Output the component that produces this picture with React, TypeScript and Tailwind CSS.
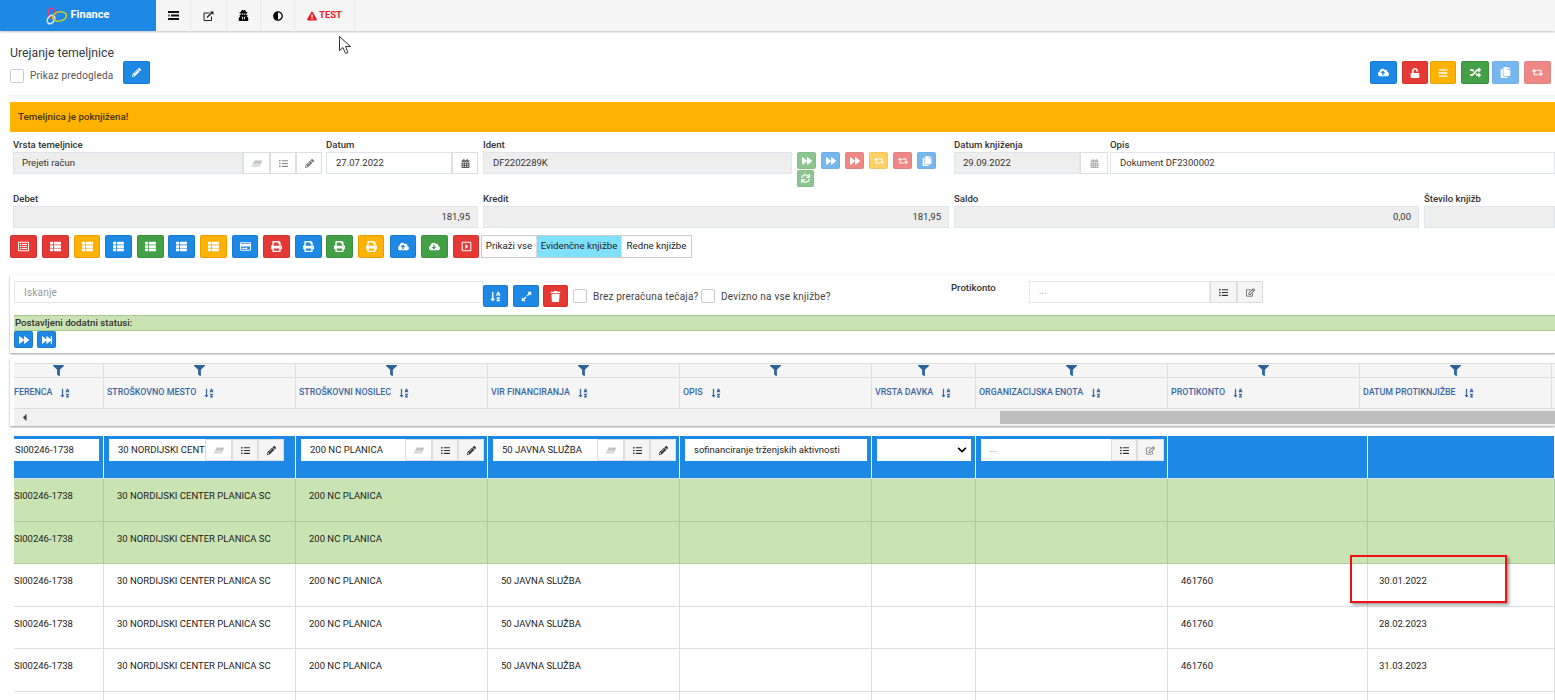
import type { ReactNode } from "react";
import {
  FaAdjust,
  FaBars,
  FaCalendarAlt,
  FaCaretLeft,
  FaChevronDown,
  FaCloudDownloadAlt,
  FaCloudUploadAlt,
  FaCopy,
  FaExclamationTriangle,
  FaExpandAlt,
  FaFastForward,
  FaFilter,
  FaForward,
  FaListUl,
  FaPencilAlt,
  FaPrint,
  FaRandom,
  FaRegCaretSquareRight,
  FaRegCreditCard,
  FaRegEdit,
  FaRegListAlt,
  FaRetweet,
  FaSortAlphaDown,
  FaSync,
  FaThList,
  FaTrash,
  FaUnlock,
  FaUserSecret,
} from "react-icons/fa";

const HEADERS = [
  "FERENCA",
  "STROŠKOVNO MESTO",
  "STROŠKOVNI NOSILEC",
  "VIR FINANCIRANJA",
  "OPIS",
  "VRSTA DAVKA",
  "ORGANIZACIJSKA ENOTA",
  "PROTIKONTO",
  "DATUM PROTIKNJIŽBE",
];

const ROWS = [
  { green: true, vir: "", konto: "", datum: "" },
  { green: true, vir: "", konto: "", datum: "" },
  { green: false, vir: "50 JAVNA SLUŽBA", konto: "461760", datum: "30.01.2022" },
  { green: false, vir: "50 JAVNA SLUŽBA", konto: "461760", datum: "28.02.2023" },
  { green: false, vir: "50 JAVNA SLUŽBA", konto: "461760", datum: "31.03.2023" },
];

function Btn({ className, children }: { className: string; children: ReactNode }) {
  return (
    <button className={`flex shrink-0 items-center justify-center rounded-[2px] border border-black/10 text-[11px] text-white ${className}`}>
      {children}
    </button>
  );
}

function Addon({ children, className = "" }: { children: ReactNode; className?: string }) {
  return (
    <span className={`flex h-[22px] shrink-0 items-center justify-center border border-[#dddddd] text-[9px] ${className}`}>
      {children}
    </span>
  );
}

function Label({ children }: { children: ReactNode }) {
  return <div className="h-[20px] pt-[6px] text-[9.6px] leading-[13px] font-medium text-[#333333]">{children}</div>;
}

function Check() {
  return <span className="h-[14px] w-[14px] shrink-0 rounded-[2px] border border-[#cccccc] bg-white" />;
}

// flat slanted eraser, the package one is too tall
function Eraser() {
  return (
    <svg width="12" height="7" viewBox="0 0 12 7">
      <path d="M3.5 0.5 H11.5 L8.5 6.5 H0.5 Z" fill="#c4c4c4" />
      <path d="M2 3.5 H10 L8.5 6.5 H0.5 Z" fill="#dedede" />
    </svg>
  );
}

function LookupAddons() {
  return (
    <>
      <Addon className="w-[27px] bg-white"><Eraser /></Addon>
      <Addon className="w-[26px] bg-[#f5f5f5] text-[#333333]"><FaListUl /></Addon>
      <Addon className="w-[26px] bg-[#f5f5f5] text-[#333333]"><FaPencilAlt /></Addon>
    </>
  );
}

function FinanceLogo() {
  return (
    <svg width="24" height="18" viewBox="0 0 24 18" fill="none">
      <ellipse cx="8" cy="6.5" rx="3.4" ry="5.5" stroke="#d8407f" strokeWidth="1.6" transform="rotate(-18 8 6.5)" />
      <ellipse cx="7" cy="12.5" rx="3.2" ry="4.6" stroke="#dbeafe" strokeWidth="1.6" transform="rotate(35 7 12.5)" />
      <ellipse cx="15.5" cy="9.5" rx="7" ry="4.6" stroke="#b8c93a" strokeWidth="1.7" transform="rotate(-12 15.5 9.5)" />
    </svg>
  );
}

function NavPanelIcon() {
  return (
    <svg width="11" height="9" viewBox="0 0 11 9">
      <path d="M0 0 H11 V2 H0 Z M3 3.5 H11 V5.5 H3 Z M0 7 H11 V9 H0 Z" fill="#111111" />
      <path d="M0 3.5 H2 V5.5 H0 Z" fill="#666666" />
    </svg>
  );
}

function NavLinkIcon() {
  return (
    <svg width="11" height="10" viewBox="0 0 11 10" fill="none" stroke="#222222">
      <path d="M6.5 2 H1 V9.5 H8.5 V5.5" strokeWidth="1" />
      <path d="M4 6.5 L9.5 1" strokeWidth="1.4" />
      <path d="M7 0.5 H10.5 V4 Z" fill="#222222" stroke="none" />
    </svg>
  );
}

export default function App() {
  return (
    <div className="relative h-[700px] w-[1555px] overflow-hidden bg-white font-['Roboto',sans-serif] text-[#333333]">
      {/* top bar */}
      <nav className="flex h-[31px] bg-[#f5f5f5] shadow-[0_1px_2px_rgba(0,0,0,0.25)]">
        <div className="flex w-[156px] items-center justify-center gap-[3px] bg-[#1e88e5] pr-[3px] text-[11px] font-bold text-white">
          <FinanceLogo />
          Finance
        </div>
        <div className="flex w-[35px] items-center justify-center border-r border-[#e8e8e8]"><NavPanelIcon /></div>
        <div className="flex w-[36px] items-center justify-center border-r border-[#e8e8e8]"><NavLinkIcon /></div>
        <div className="flex w-[34px] items-center justify-center border-r border-[#e8e8e8] text-[11px] text-black"><FaUserSecret /></div>
        <div className="flex w-[34px] items-center justify-center border-r border-[#e8e8e8] text-[10px] text-black"><FaAdjust /></div>
        <div className="flex w-[60px] items-center justify-center gap-[2px] border-r border-[#e8e8e8] text-[9.5px] font-bold text-[#ee1c25]">
          <FaExclamationTriangle className="text-[10px]" /> TEST
        </div>
      </nav>

      {/* page title */}
      <header className="flex items-end justify-between pt-[14px] pr-[4px] pl-[10px]">
        <div>
          <h1 className="text-[12.3px] leading-[16px] text-[#333c4a]">Urejanje temeljnice</h1>
          <div className="flex h-[23px] items-center">
            <span className="mt-[6px] flex items-center gap-[6px] text-[10px] tracking-[0.2px] text-[#555555]">
              <Check />
              Prikaz predogleda
            </span>
            <Btn className="ml-[10px] h-[23px] w-[27px] bg-[#1e88e5]"><FaPencilAlt className="text-[9px]" /></Btn>
          </div>
        </div>
        <div className="flex h-[23px] text-[11px]">
          <Btn className="h-[23px] w-[27px] bg-[#1e88e5]"><FaCloudUploadAlt /></Btn>
          <Btn className="ml-[5px] h-[23px] w-[26px] bg-[#e53935]"><FaUnlock className="text-[10px]" /></Btn>
          <Btn className="ml-[2px] h-[23px] w-[26px] bg-[#ffb300]"><FaBars className="text-[10px]" /></Btn>
          <Btn className="ml-[5px] h-[23px] w-[28px] bg-[#43a047]"><FaRandom /></Btn>
          <Btn className="ml-[3px] h-[23px] w-[27px] bg-[#1e88e5] opacity-60"><FaCopy /></Btn>
          <Btn className="ml-[5px] h-[23px] w-[27px] bg-[#e53935] opacity-60"><FaRetweet /></Btn>
        </div>
      </header>
      <div className="mt-[11px] ml-[8px] h-px bg-[#f3f3f3]" />

      {/* status banner */}
      <div className="mt-[6px] ml-[10px] flex h-[30px] items-center bg-[#ffb300] pl-[8px] text-[9.8px] font-medium text-[#4a3300]">
        Temeljnica je poknjižena!
      </div>

      {/* header form */}
      <section className="flex h-[60px] pl-[13px] text-[9.5px]">
        <div className="w-[309px]">
          <Label>Vrsta temeljnice</Label>
          <div className="flex">
            <div className="flex h-[22px] w-[230px] items-center border border-[#dfe5ea] bg-[#eeeeee] pl-[8px]">Prejeti račun</div>
            <Addon className="w-[27px] bg-white"><Eraser /></Addon>
            <Addon className="w-[26px] bg-white text-[#888888]"><FaListUl /></Addon>
            <Addon className="w-[26px] bg-white text-[#777777]"><FaPencilAlt /></Addon>
          </div>
        </div>
        <div className="ml-[4px] w-[152px]">
          <Label>Datum</Label>
          <div className="flex">
            <div className="flex h-[22px] w-[126px] items-center border border-[#dfe5ea] bg-white pl-[9px]">27.07.2022</div>
            <Addon className="w-[26px] bg-white text-[#555555]"><FaCalendarAlt /></Addon>
          </div>
        </div>
        <div className="ml-[5px] w-[309px]">
          <Label>Ident</Label>
          <div className="flex h-[22px] items-center border border-[#dfe5ea] bg-[#eeeeee] pl-[9px]">DF2202289K</div>
        </div>
        <div className="mt-[20px] ml-[5px] flex w-[157px] flex-wrap content-start gap-x-[5px] gap-y-[1px]">
          <Btn className="h-[17px] w-[19px] bg-[#43a047] opacity-60"><FaForward className="text-[10px]" /></Btn>
          <Btn className="h-[17px] w-[19px] bg-[#1e88e5] opacity-60"><FaForward className="text-[10px]" /></Btn>
          <Btn className="h-[17px] w-[19px] bg-[#e53935] opacity-60"><FaForward className="text-[10px]" /></Btn>
          <Btn className="h-[17px] w-[19px] bg-[#ffb300] opacity-60"><FaRetweet className="text-[10px]" /></Btn>
          <Btn className="h-[17px] w-[19px] bg-[#e53935] opacity-60"><FaRetweet className="text-[10px]" /></Btn>
          <Btn className="h-[17px] w-[19px] bg-[#1e88e5] opacity-60"><FaCopy className="text-[10px]" /></Btn>
          <Btn className="h-[17px] w-[17px] bg-[#43a047] opacity-60"><FaSync className="text-[9px]" /></Btn>
        </div>
        <div className="w-[156px]">
          <Label>Datum knjiženja</Label>
          <div className="flex">
            <div className="flex h-[22px] w-[126px] items-center border border-[#dfe5ea] bg-[#eeeeee] pl-[8px]">29.09.2022</div>
            <Addon className="w-[28px] bg-white text-[#aaaaaa]"><FaCalendarAlt /></Addon>
          </div>
        </div>
        <div className="min-w-0 flex-1">
          <Label>Opis</Label>
          <div className="flex h-[22px] items-center border border-[#dfe5ea] bg-white pl-[9px]">Dokument DF2300002</div>
        </div>
      </section>

      <section className="flex gap-[5px] pl-[13px] text-[9.5px]">
        <div className="w-[465px]">
          <div className="h-[14px] text-[9.6px] leading-[13px] font-medium">Debet</div>
          <div className="flex h-[22px] items-center justify-end border border-[#dfe5ea] bg-[#eeeeee] pr-[7px]">181,95</div>
        </div>
        <div className="w-[466px]">
          <div className="h-[14px] text-[9.6px] leading-[13px] font-medium">Kredit</div>
          <div className="flex h-[22px] items-center justify-end border border-[#dfe5ea] bg-[#eeeeee] pr-[7px]">181,95</div>
        </div>
        <div className="w-[465px]">
          <div className="h-[14px] text-[9.6px] leading-[13px] font-medium">Saldo</div>
          <div className="flex h-[22px] items-center justify-end border border-[#dfe5ea] bg-[#eeeeee] pr-[7px]">0,00</div>
        </div>
        <div className="flex-1">
          <div className="h-[14px] text-[9.6px] leading-[13px] font-medium">Število knjižb</div>
          <div className="h-[22px] border border-[#dfe5ea] bg-[#eeeeee]" />
        </div>
      </section>

      {/* action buttons */}
      <div className="mt-[7px] flex h-[23px] pl-[10px]">
        <Btn className="h-[23px] w-[27px] bg-[#e53935]"><FaRegListAlt /></Btn>
        <Btn className="ml-[5px] h-[23px] w-[27px] bg-[#e53935]"><FaThList /></Btn>
        <Btn className="ml-[5px] h-[23px] w-[26px] bg-[#ffb300]"><FaThList /></Btn>
        <Btn className="ml-[5px] h-[23px] w-[27px] bg-[#1e88e5]"><FaThList /></Btn>
        <Btn className="ml-[5px] h-[23px] w-[27px] bg-[#43a047]"><FaThList /></Btn>
        <Btn className="ml-[4px] h-[23px] w-[27px] bg-[#1e88e5]"><FaThList /></Btn>
        <Btn className="ml-[5px] h-[23px] w-[27px] bg-[#ffb300]"><FaThList /></Btn>
        <Btn className="ml-[5px] h-[23px] w-[26px] bg-[#1e88e5]"><FaRegCreditCard /></Btn>
        <Btn className="ml-[5px] h-[23px] w-[27px] bg-[#e53935]"><FaPrint /></Btn>
        <Btn className="ml-[5px] h-[23px] w-[27px] bg-[#1e88e5]"><FaPrint /></Btn>
        <Btn className="ml-[4px] h-[23px] w-[27px] bg-[#43a047]"><FaPrint /></Btn>
        <Btn className="ml-[5px] h-[23px] w-[26px] bg-[#ffb300]"><FaPrint /></Btn>
        <Btn className="ml-[6px] h-[23px] w-[26px] bg-[#1e88e5]"><FaCloudUploadAlt /></Btn>
        <Btn className="ml-[5px] h-[23px] w-[27px] bg-[#43a047]"><FaCloudDownloadAlt /></Btn>
        <Btn className="ml-[5px] h-[23px] w-[26px] bg-[#e53935]"><FaRegCaretSquareRight /></Btn>
        <div className="ml-[2px] flex h-[23px] border border-[#cccccc] text-[9.7px] text-[#222222]">
          <span className="flex w-[55px] items-center justify-center border-r border-[#dddddd]">Prikaži vse</span>
          <span className="flex w-[85px] items-center justify-center border-r border-[#dddddd] bg-[#80e1fd]">Evidenčne knjižbe</span>
          <span className="flex w-[69px] items-center justify-center">Redne knjižbe</span>
        </div>
      </div>

      {/* filter panel */}
      <section className="mt-[17px] ml-[10px] h-[78px] pt-[6px] pl-[4px] shadow-[0_1px_2px_rgba(0,0,0,0.4)]">
        <div className="flex h-[34px] text-[10px] tracking-[0.2px] whitespace-nowrap text-[#444444]">
          <div className="flex h-[22px] w-[469px] items-center border border-[#dfe7ef] pl-[9px] text-[10px] text-[#999999]">Iskanje</div>
          <Btn className="mt-[4px] h-[22px] w-[25px] bg-[#1e88e5]"><FaSortAlphaDown /></Btn>
          <Btn className="mt-[4px] ml-[5px] h-[22px] w-[26px] bg-[#1e88e5]"><FaExpandAlt /></Btn>
          <Btn className="mt-[4px] ml-[4px] h-[22px] w-[25px] bg-[#e53935]"><FaTrash /></Btn>
          <div className="mt-[4px] ml-[5px] flex h-[22px] items-center">
            <Check />
            <span className="ml-[6px] w-[108px]">Brez preračuna tečaja?</span>
            <Check />
            <span className="ml-[6px] w-[230px]">Devizno na vse knjižbe?</span>
          </div>
          <div className="w-[78px] text-[9.6px] leading-[13px] font-medium tracking-normal text-[#333333]">Protikonto</div>
          <div className="flex h-[22px] w-[181px] items-center border border-[#dfe7ef] pl-[9px] text-[9px] text-[#777777]">...</div>
          <Addon className="w-[27px] bg-[#f5f5f5] text-[#333333]"><FaListUl /></Addon>
          <Addon className="w-[26px] bg-[#f5f5f5] text-[#555555]"><FaRegEdit /></Addon>
        </div>
        <div className="flex h-[16px] items-center border-y border-[#a8c890] bg-[#cae3b3] pl-[1px] text-[9.7px] font-medium text-[#333333]">Postavljeni dodatni statusi:</div>
        <div className="flex gap-[4px]">
          <Btn className="h-[17px] w-[19px] bg-[#1e88e5]"><FaForward className="text-[10px]" /></Btn>
          <Btn className="h-[17px] w-[19px] bg-[#1e88e5]"><FaFastForward className="text-[10px]" /></Btn>
        </div>
      </section>

      {/* table header */}
      <section className="mt-[5px] ml-[10px] h-[68px] pt-[5px] pl-[4px] shadow-[0_1px_2px_rgba(0,0,0,0.4)]">
        <div className="grid h-[15px] grid-cols-[90px_192px_192px_192px_192px_104px_192px_192px_192px_1fr] border-y border-[#dddddd] bg-[#f5f5f5]">
          {HEADERS.map((h) => (
            <div key={h} className="flex items-center justify-center border-r border-[#dddddd] text-[11px] text-[#2b6299]">
              <FaFilter />
            </div>
          ))}
          <div />
        </div>
        <div className="grid h-[31px] grid-cols-[90px_192px_192px_192px_192px_104px_192px_192px_192px_1fr] border-b border-[#dddddd] bg-[#f5f5f5]">
          {HEADERS.map((h, i) => (
            <div key={h} className={`flex items-center gap-[8px] overflow-hidden border-r border-[#dddddd] text-[8.9px] font-medium whitespace-nowrap text-[#3a68a5] ${i === 0 ? "" : "pl-[3px]"}`}>
              {h}
              <FaSortAlphaDown className="shrink-0 text-[10px]" />
            </div>
          ))}
          <div />
        </div>
        <div className="flex h-[17px] items-center justify-between bg-[#f1f1f1]">
          <FaCaretLeft className="ml-[5px] text-[11px] text-[#444444]" />
          <div className="h-[13px] w-[555px] bg-[#bdbdbd]" />
        </div>
      </section>

      {/* data rows */}
      <section className="mt-[10px] ml-[14px] text-[9.5px] text-[#222222]">
        <div className="grid h-[43px] grid-cols-[90px_192px_192px_192px_192px_104px_192px_200px_1fr] border-b border-[#cfe0ee] bg-[#1e88e5]">
          <div className="border-r border-white pt-[3px]">
            <div className="flex h-[22px] w-[85px] items-center bg-white pl-[1px]">SI00246-1738</div>
          </div>
          <div className="flex border-r border-white pt-[3px] pl-[5px]">
            <div className="flex h-[22px] w-[96px] items-center overflow-hidden bg-white pl-[9px] whitespace-nowrap">30 NORDIJSKI CENT</div>
            <LookupAddons />
          </div>
          <div className="flex border-r border-white pt-[3px] pl-[5px]">
            <div className="flex h-[22px] w-[104px] items-center bg-white pl-[9px]">200 NC PLANICA</div>
            <LookupAddons />
          </div>
          <div className="flex border-r border-white pt-[3px] pl-[5px]">
            <div className="flex h-[22px] w-[104px] items-center bg-white pl-[9px]">50 JAVNA SLUŽBA</div>
            <LookupAddons />
          </div>
          <div className="border-r border-white pt-[3px] pl-[5px]">
            <div className="flex h-[22px] w-[182px] items-center bg-white pl-[9px]">sofinanciranje trženjskih aktivnosti</div>
          </div>
          <div className="border-r border-white pt-[3px] pl-[5px]">
            <div className="flex h-[22px] w-[94px] items-center justify-end bg-white pr-[4px] text-[10px] text-black"><FaChevronDown /></div>
          </div>
          <div className="flex border-r border-white pt-[3px] pl-[5px]">
            <div className="flex h-[22px] w-[130px] items-center bg-white pl-[9px] text-[9px] text-[#777777]">...</div>
            <Addon className="w-[26px] bg-[#f5f5f5] text-[#333333]"><FaListUl /></Addon>
            <Addon className="w-[27px] bg-[#f5f5f5] text-[#777777]"><FaRegEdit /></Addon>
          </div>
          <div className="border-r border-white" />
          <div className="border-r border-white" />
        </div>
        {ROWS.map((row, i) => (
          <div
            key={i}
            className={`grid h-[42.6px] grid-cols-[90px_192px_192px_192px_192px_104px_192px_200px_1fr] border-b ${
              row.green ? "border-[#afca9c] bg-[#cae3b3]" : "border-[#dddddd] bg-white"
            }`}
          >
            {[
              "SI00246-1738",
              "30 NORDIJSKI CENTER PLANICA SC",
              "200 NC PLANICA",
              row.vir,
              "",
              "",
              "",
              row.konto,
            ].map((text, j) => (
              <div
                key={j}
                className={`border-r pt-[10px] leading-[13px] whitespace-nowrap ${j === 0 ? "" : "pl-[13px]"} ${
                  row.green ? "border-[#afca9c]" : "border-[#dddddd]"
                }`}
              >
                {text}
              </div>
            ))}
            <div className={`border-r pt-[10px] pl-[11px] leading-[13px] ${row.green ? "border-[#afca9c]" : "border-[#dddddd]"}`}>{row.datum}</div>
          </div>
        ))}
        <div className="grid h-[9px] grid-cols-[90px_192px_192px_192px_192px_104px_192px_200px_1fr]">
          {HEADERS.map((h) => (
            <div key={h} className="border-r border-[#dddddd]" />
          ))}
        </div>
      </section>

      {/* red annotation drawn over the table */}
      <div className="absolute top-[555px] left-[1350px] h-[48px] w-[157px] border-2 border-[#ee1111] shadow-[2px_2px_3px_rgba(0,0,0,0.4)]" />

      {/* mouse cursor */}
      <svg className="absolute top-[36px] left-[339px]" width="13" height="20" viewBox="0 0 13 20">
        <path d="M0.5 0.5 L0.5 14.5 L4 11.5 L6.5 17.5 L9 16.5 L6.5 10.5 L11.5 10.5 Z" fill="white" stroke="#333333" strokeWidth="1" />
      </svg>
    </div>
  );
}
